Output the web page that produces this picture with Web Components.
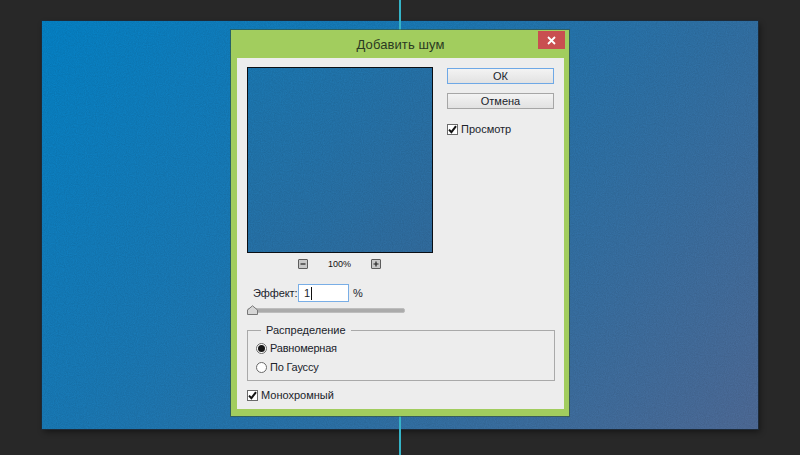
<!DOCTYPE html>
<html>
<head>
<meta charset="utf-8">
<style>
  html, body { margin: 0; padding: 0; background: #282828; }
  body { font: 11px "Liberation Sans", Arial, sans-serif; color: #20232b; }
</style>
</head>
<body>
<ps-workspace>
  <ps-dialog heading="Добавить шум">
    <ps-preview slot="preview"></ps-preview>
    <ps-zoom slot="preview" value="100%"></ps-zoom>
    <ps-amount slot="preview" label="Эффект:" value="1" unit="%"></ps-amount>
    <ps-slider slot="preview"></ps-slider>
    <ps-button slot="actions" focused>ОК</ps-button>
    <ps-button slot="actions">Отмена</ps-button>
    <ps-check slot="actions" checked>Просмотр</ps-check>
    <ps-group slot="bottom" legend="Распределение">
      <ps-radio checked>Равномерная</ps-radio>
      <ps-radio>По Гауссу</ps-radio>
    </ps-group>
    <ps-check slot="bottom" checked style="margin-top: 8px">Монохромный</ps-check>
  </ps-dialog>
</ps-workspace>

<script>
// small helper so every element is set up the same way
class PsElement extends HTMLElement {
  constructor() {
    super();
    this.attachShadow({ mode: 'open' });
  }
  connectedCallback() {
    this.shadowRoot.innerHTML = this.render();
  }
}

const noise = (id, opacity) => `
  <svg class="noise" width="100%" height="100%" aria-hidden="true">
    <filter id="${id}"><feTurbulence type="fractalNoise" baseFrequency="0.9" numOctaves="2" seed="4"/>
      <feColorMatrix values="0 0 0 0 0  0 0 0 0 0  0 0 0 0 0  1.4 0 0 0 -0.35"/></filter>
    <rect width="100%" height="100%" filter="url(#${id})" opacity="${opacity}"/>
  </svg>`;

const CHECK_MARK = '<svg width="9" height="9" viewBox="0 0 9 9"><path d="M1 4.6 L3.4 7.2 L8 1.2" fill="none" stroke="#111" stroke-width="2"/></svg>';

class PsWorkspace extends PsElement {
  render() {
    return `
      <style>
        :host { display: block; width: 800px; height: 455px; box-sizing: border-box; padding: 21px 42px 26px; position: relative; overflow: hidden; background: #282828; }
        .canvas { position: relative; width: 716px; height: 408px; background: linear-gradient(131deg, #0582c6 0%, #1a79b5 35%, #2e71a6 62%, #4e6a96 100%); box-shadow: 0 0 0 1px #1d2a38, 2px 3px 6px rgba(0,0,0,.45); }
        .noise { position: absolute; inset: 0; }
        .guide { position: absolute; left: 399px; top: 0; width: 2px; height: 455px; background: #35b4c8; }
      </style>
      <div class="canvas">${noise('canvas-noise', 0.1)}</div>
      <div class="guide"></div>
      <slot></slot>`;
  }
}

class PsDialog extends PsElement {
  render() {
    return `
      <style>
        :host { display: block; position: absolute; left: 231px; top: 30px; width: 338px; height: 386px; box-sizing: border-box; background: #a2cd5e; padding: 0 5px 7px 6px; box-shadow: 0 0 0 1px rgba(60,80,40,.55); }
        .title { height: 28px; line-height: 29px; text-align: center; font-size: 13px; letter-spacing: .1px; color: #2b3a22; position: relative; }
        .close { position: absolute; right: -1px; top: 1px; width: 27px; height: 18px; background: #c94f50; color: #fff; display: flex; align-items: center; justify-content: center; }
        .panel { height: 351px; box-sizing: border-box; background: #ededed; padding: 9px 9px 0 10px; }
        .top { display: grid; grid-template-columns: 186px 107px; column-gap: 14px; }
        .bottom { display: block; margin-top: 15px; }
      </style>
      <div class="title">${this.getAttribute('heading')}
        <div class="close"><svg width="9" height="9" viewBox="0 0 9 9"><path d="M1 1 L8 8 M8 1 L1 8" stroke="#fff" stroke-width="1.8"/></svg></div>
      </div>
      <div class="panel">
        <div class="top">
          <div><slot name="preview"></slot></div>
          <div><slot name="actions"></slot></div>
        </div>
        <div class="bottom"><slot name="bottom"></slot></div>
      </div>`;
  }
}

class PsPreview extends PsElement {
  render() {
    return `
      <style>
        :host { display: block; position: relative; width: 186px; height: 186px; box-sizing: border-box; border: 1px solid #0b0f14; background: linear-gradient(135deg, #1b78b2, #326c9e); overflow: hidden; }
        .noise { position: absolute; inset: 0; }
      </style>
      ${noise('preview-noise', 0.1)}`;
  }
}

class PsZoom extends PsElement {
  render() {
    const btn = (icon) => `<span class="btn"><svg width="6" height="6" viewBox="0 0 6 6"><path d="${icon}" stroke="#222" stroke-width="1.2" fill="none"/></svg></span>`;
    return `
      <style>
        :host { display: flex; justify-content: space-between; align-items: center; width: 83px; height: 10px; margin: 6px 0 0 51px; font-size: 9px; color: #111; }
        .btn { width: 8px; height: 8px; border: 1px solid #5c5c5c; background: #c8c8c8; display: flex; align-items: center; justify-content: center; border-radius: 1px; }
      </style>
      ${btn('M0.5 3 H5.5')}<span>${this.getAttribute('value')}</span>${btn('M0.5 3 H5.5 M3 0.5 V5.5')}`;
  }
}

class PsAmount extends PsElement {
  render() {
    return `
      <style>
        :host { display: flex; align-items: center; height: 18px; margin: 15px 0 0 6px; }
        .label { width: 45px; letter-spacing: -.1px; }
        .input { width: 51px; height: 18px; box-sizing: border-box; border: 1px solid #79aee6; background: #fff; padding-left: 5px; line-height: 16px; display: flex; align-items: center; }
        .caret { width: 1px; height: 13px; background: #111; margin-left: 1px; }
        .unit { margin-left: 4px; }
      </style>
      <span class="label">${this.getAttribute('label')}</span>
      <span class="input">${this.getAttribute('value')}<span class="caret"></span></span>
      <span class="unit">${this.getAttribute('unit')}</span>`;
  }
}

class PsSlider extends PsElement {
  render() {
    return `
      <style>
        :host { display: flex; align-items: center; position: relative; width: 158px; height: 10px; margin-top: 3px; }
        .track { width: 100%; height: 5px; margin-top: 1px; background: #ababab; border: 1px solid #bdbdbd; box-sizing: border-box; border-radius: 2px; }
        svg { position: absolute; left: 0; top: 0; }
      </style>
      <div class="track"></div>
      <svg width="11" height="10" viewBox="0 0 11 10"><path d="M0.5 9.5 V5 L5.5 0.8 L10.5 5 V9.5 Z" fill="#d6d6d6" stroke="#777"/></svg>`;
  }
}

class PsButton extends PsElement {
  render() {
    const focused = this.hasAttribute('focused');
    return `
      <style>
        :host { display: block; height: 16px; box-sizing: border-box; margin: 1px 0 9px; text-align: center; line-height: 14px;
          border: ${focused ? '1px solid #6ea8e6' : '1px solid #a6a6a6'};
          background: linear-gradient(#f3f3f3, #e2e2e2); }
      </style>
      <slot></slot>`;
  }
}

class PsCheck extends PsElement {
  render() {
    const mark = this.hasAttribute('checked') ? CHECK_MARK : '';
    return `
      <style>
        :host { display: flex; align-items: center; gap: 3px; height: 12px; margin-top: 14px; }
        .box { width: 11px; height: 11px; box-sizing: border-box; border: 1px solid #6a6a6a; background: #fff; display: flex; align-items: center; justify-content: center; }
      </style>
      <span class="box">${mark}</span><span class="text"><slot></slot></span>`;
  }
}

class PsRadio extends PsElement {
  render() {
    const dot = this.hasAttribute('checked') ? '<span class="dot"></span>' : '';
    return `
      <style>
        :host { display: flex; align-items: center; gap: 3px; height: 12px; letter-spacing: -.2px; }
        .ring { width: 11px; height: 11px; box-sizing: border-box; border: 1px solid #6a6a6a; border-radius: 50%; background: #fff; display: flex; align-items: center; justify-content: center; }
        .dot { width: 7px; height: 7px; border-radius: 50%; background: #151515; }
      </style>
      <span class="ring">${dot}</span><slot></slot>`;
  }
}

class PsGroup extends PsElement {
  render() {
    return `
      <style>
        :host { display: block; position: relative; width: 308px; height: 51px; box-sizing: border-box; border: 1px solid #a9a9a9; padding: 11px 8px 0; }
        .legend { position: absolute; left: 13px; top: -7px; padding: 0 5px; background: #ededed; line-height: 13px; }
        .rows { display: grid; row-gap: 7px; }
      </style>
      <span class="legend">${this.getAttribute('legend')}</span>
      <div class="rows"><slot></slot></div>`;
  }
}

customElements.define('ps-workspace', PsWorkspace);
customElements.define('ps-dialog', PsDialog);
customElements.define('ps-preview', PsPreview);
customElements.define('ps-zoom', PsZoom);
customElements.define('ps-amount', PsAmount);
customElements.define('ps-slider', PsSlider);
customElements.define('ps-button', PsButton);
customElements.define('ps-check', PsCheck);
customElements.define('ps-radio', PsRadio);
customElements.define('ps-group', PsGroup);
</script>
</body>
</html>
